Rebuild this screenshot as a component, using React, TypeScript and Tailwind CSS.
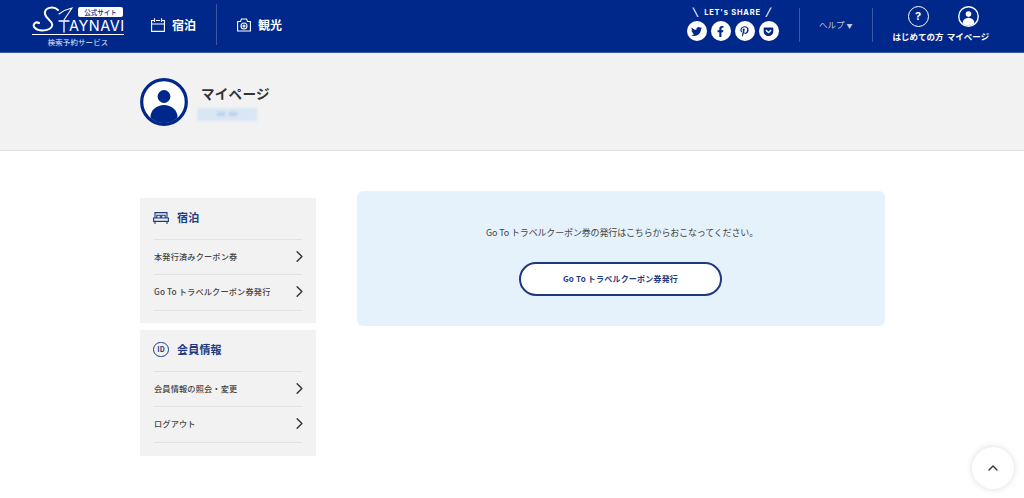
import React from 'react';
import { ChevronRight, ChevronUp } from 'lucide-react';
import { FaTwitter, FaFacebookF, FaPinterestP, FaGetPocket } from 'react-icons/fa';

function UserIcon({ className, ring, fill, bg }: { className?: string; ring: string; fill: string; bg: string }) {
  return (
    <svg viewBox="0 0 48 48" className={className}>
      <defs>
        <clipPath id={`c-${fill.slice(1)}`}><circle cx="24" cy="24" r="21" /></clipPath>
      </defs>
      <circle cx="24" cy="24" r="22.3" fill={bg} stroke={ring} strokeWidth="3.2" />
      <circle cx="24" cy="18.5" r="6.4" fill={fill} />
      <ellipse cx="24" cy="39" rx="13.5" ry="12" fill={fill} clipPath={`url(#c-${fill.slice(1)})`} />
    </svg>
  );
}

function Logo() {
  return (
    <div className="relative w-[92px] h-[52px] ml-[32px] shrink-0 text-white">
      <svg viewBox="0 0 92 36" className="w-[92px] h-[36px] absolute left-0 top-0" fill="none" stroke="#fff" strokeLinecap="round">
        <path d="M26 10 C21 5 12 8 13 14 C14 20 22 21 20 26 C18 31 7 32 3 28 C0 25 3 21 7 23" strokeWidth="2" />
        <path d="M27 14 C31 11 35 9 40 8 L32 20" strokeWidth="1.1" />
        <path d="M27 21 H37 M32 21 V32" strokeWidth="1.3" />
        <path d="M0 34.5 L92 34.5" strokeWidth="1" />
      </svg>
      <span className="absolute left-[46px] top-[7px] w-[45px] h-[10px] bg-white rounded-[2px] text-[6.5px] leading-[10px] text-center text-[#00288a] font-medium">公式サイト</span>
      <span className="absolute left-[37px] top-[18px] text-[14.5px] leading-[16px] tracking-[0.5px] font-['Inter']">AYNAVI</span>
      <span className="absolute left-0 w-full top-[37px] text-[7.4px] leading-[10px] text-center tracking-[0.2px] text-white/90">検索予約サービス</span>
    </div>
  );
}

function CalendarIcon() {
  return (
    <svg viewBox="0 0 14 14" className="w-[14px] h-[14px]" fill="none" stroke="#fff" strokeWidth="1.1">
      <path d="M3 2.5 H0.6 V13.4 H13.4 V2.5 H11 M5 2.5 H9 M3.5 0.3 V4 M10.5 0.3 V4 M0.6 6 H13.4" />
    </svg>
  );
}

function CameraIcon() {
  return (
    <svg viewBox="0 0 14 14" className="w-[14px] h-[14px]" fill="none" stroke="#fff" strokeWidth="1.1">
      <path d="M0.6 3.5 H3.5 L4.5 1 H9.5 L10.5 3.5 H13.4 V13 H0.6 Z" />
      <circle cx="7" cy="8" r="3" />
      <circle cx="7" cy="8" r="1" />
    </svg>
  );
}

function BedIcon() {
  return (
    <svg viewBox="0 0 16 12" className="w-[16px] h-[12px] -ml-[1px]" fill="none" stroke="currentColor" strokeWidth="1.1">
      <path d="M2 6 V0.6 H14 V6 M3.8 6 V3.3 H7.3 V6 M8.7 6 V3.3 H12.2 V6" />
      <path d="M0.6 6 H15.4 V9.4 H0.6 Z M2 9.4 V12 M14 9.4 V12" />
    </svg>
  );
}

function Header() {
  const share = [FaTwitter, FaFacebookF, FaPinterestP, FaGetPocket];
  return (
    <header className="h-[53px] bg-[#00288a] border-b border-[#3a5aa5] flex items-center text-white">
      <Logo />
      <a className="flex items-center ml-[27px] w-[65px] -mt-[3px]">
        <CalendarIcon />
        <span className="ml-[7px] text-[12px] font-bold">宿泊</span>
      </a>
      <div className="w-px h-[41px] bg-[#3a5aa5] -mt-[3px]" />
      <a className="flex items-center ml-[20px] -mt-[3px]">
        <CameraIcon />
        <span className="ml-[7px] text-[12px] font-bold">観光</span>
      </a>

      <div className="ml-auto flex flex-col items-center w-[93px] pr-[2px] -mt-[3px]">
        <div className="text-[7.5px] leading-[10px] font-bold tracking-[0.8px] font-['Inter'] mb-[3px] whitespace-nowrap">╲&nbsp; LET's SHARE &nbsp;╱</div>
        <div className="flex gap-[4px] text-[#00288a]">
          {share.map((Icon, i) => (
            <span key={i} className="w-[20px] h-[20px] rounded-full bg-white flex items-center justify-center">
              <Icon className="w-[11px] h-[11px]" />
            </span>
          ))}
        </div>
      </div>
      <div className="w-px h-[34px] bg-[#3a5aa5] ml-[19px] -mt-[2px]" />
      <div className="ml-[19px] text-[8.5px] text-white/75 w-[36px] whitespace-nowrap -mt-[3px]">ヘルプ <span className="text-[6px]">▼</span></div>
      <div className="w-px h-[34px] bg-[#3a5aa5] ml-[17px] -mt-[2px]" />
      <div className="flex flex-col items-center ml-[20px] w-[50px] -mt-[5px]">
        <div className="w-[21px] h-[21px] rounded-full border-[1.5px] border-white flex items-center justify-center text-[11px] font-bold font-['Inter']">?</div>
        <span className="text-[8.5px] leading-[12px] font-bold mt-[3px] whitespace-nowrap">はじめての方</span>
      </div>
      <div className="flex flex-col items-center ml-[5px] w-[40px] mr-[36px] -mt-[5px]">
        <UserIcon className="w-[21px] h-[21px]" ring="#ffffff" fill="#ffffff" bg="#00288a" />
        <span className="text-[8.5px] leading-[12px] font-bold mt-[3px] whitespace-nowrap">マイページ</span>
      </div>
    </header>
  );
}

function SideBox({ icon, title, items, className }: { icon: React.ReactNode; title: string; items: string[]; className?: string }) {
  return (
    <section className={`bg-[#f2f2f2] px-[14px] ${className ?? ''}`}>
      <div className="h-[41px] pb-[2px] flex items-center text-[#1d3a80]">
        {icon}
        <span className="ml-[8px] text-[11px] font-bold tracking-[0.2px]">{title}</span>
      </div>
      <ul className="border-t border-[#e2e2e2]">
        {items.map((t) => (
          <li key={t} className="h-[35px] last:h-[36px] pb-[2px] flex items-center justify-between border-b border-[#e2e2e2] text-[8.2px] text-[#444] font-medium tracking-[0.15px]">
            {t}
            <ChevronRight className="w-[19px] h-[19px] text-[#333] -mr-[7px]" strokeWidth={1.8} />
          </li>
        ))}
      </ul>
    </section>
  );
}

export default function App() {
  return (
    <div className="relative h-[498px] overflow-hidden bg-white font-['Noto_Sans_CJK_JP','Noto_Sans',sans-serif] text-[#333]">
      <Header />
      <div className="h-[98px] bg-[#f2f2f2] border-b border-[#e0e0e0] pl-[140px] flex items-center">
        <UserIcon className="w-[48px] h-[48px]" ring="#00288a" fill="#00288a" bg="#ffffff" />
        <div className="ml-[13px]">
          <h1 className="text-[13.6px] leading-[20px] font-bold text-[#333] tracking-[0.2px]">マイページ</h1>
          <div className="mt-[5px] -ml-[4px] w-[60px] h-[13px] bg-[#d9e6f5] blur-[0.8px] flex items-center justify-center gap-[4px]">
            <span className="w-[8px] h-[4px] bg-[#bcd2ea]" />
            <span className="w-[8px] h-[4px] bg-[#bcd2ea]" />
          </div>
        </div>
      </div>

      <div className="flex pl-[140px] items-start">
        <aside className="w-[176px] mt-[47px] shrink-0">
          <SideBox icon={<BedIcon />} title="宿泊" items={['本発行済みクーポン券', 'Go To トラベルクーポン券発行']} className="pb-[12px]" />
          <SideBox
            icon={<span className="w-[16px] h-[15px] -ml-[1px] rounded-full border-[1.5px] border-[#1d3a80] text-[7px] leading-none flex items-center justify-center font-bold">ID</span>}
            title="会員情報"
            items={['会員情報の照会・変更', 'ログアウト']}
            className="mt-[7px] pb-[13px]"
          />
        </aside>
        <main className="w-[528px] h-[135px] ml-[41px] mt-[40px] bg-[#e6f2fb] rounded-[6px] flex flex-col items-center">
          <p className="mt-[34px] ml-[2px] text-[9px] leading-[16px] text-[#444] tracking-[-0.15px] whitespace-nowrap">Go To トラベルクーポン券の発行はこちらからおこなってください。</p>
          <a className="mt-[21px] -ml-[1px] w-[203px] h-[34px] rounded-full bg-white border-2 border-[#1d3a80] flex items-center justify-center text-[8px] font-bold text-[#1d3a80] tracking-[0.2px]">Go To トラベルクーポン券発行</a>
        </main>
      </div>

      <button className="fixed left-[972px] top-[447px] w-[42px] h-[42px] rounded-full bg-white shadow-[0_0_6px_rgba(0,0,0,0.15)] flex items-center justify-center">
        <ChevronUp className="w-[16px] h-[16px] text-[#333]" strokeWidth={2} />
      </button>
    </div>
  );
}
